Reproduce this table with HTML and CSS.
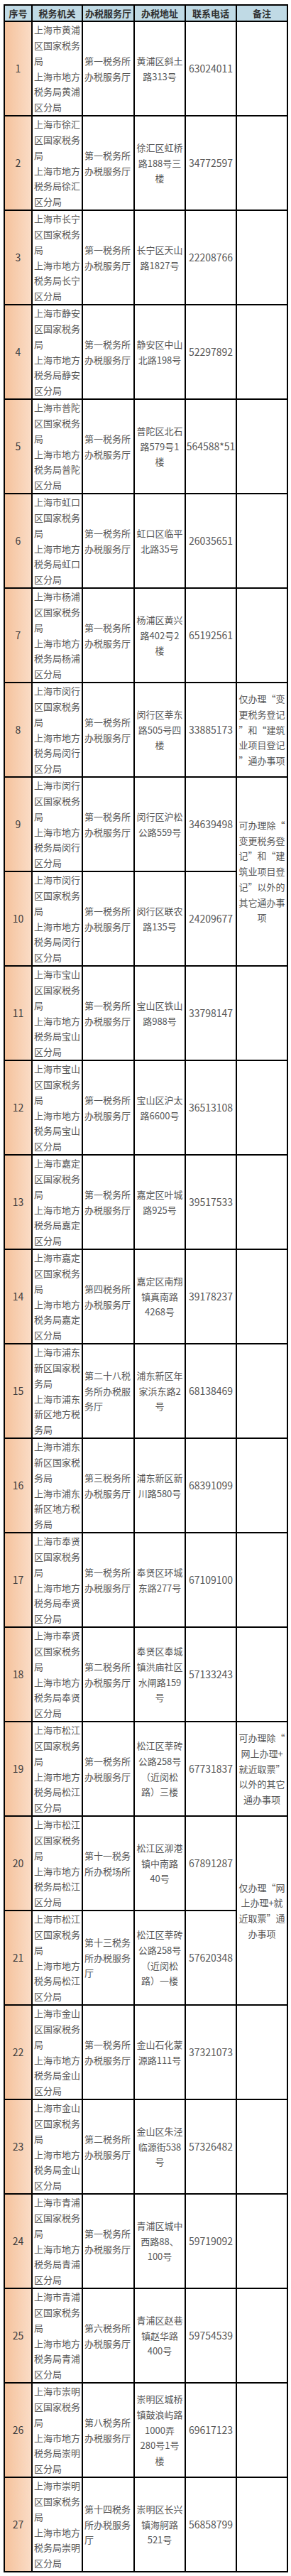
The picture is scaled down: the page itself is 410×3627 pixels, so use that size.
FILE: index.html
```html
<!DOCTYPE html>
<html lang="zh-CN">
<head>
<meta charset="utf-8">
<title>上海市办税服务厅</title>
<link rel="stylesheet" href="styles.css">
</head>
<body>
<div class="sheet">
  <div class="c th">序号</div>
  <div class="c th">税务机关</div>
  <div class="c th">办税服务厅</div>
  <div class="c th">办税地址</div>
  <div class="c th">联系电话</div>
  <div class="c th">备注</div>

  <div class="c idx"><p>1</p></div>
  <div class="c org"><p>上海市黄浦<br>区国家税务<br>局<br>上海市地方<br>税务局黄浦<br>区分局</p></div>
  <div class="c hall"><p>第一税务所<br>办税服务厅</p></div>
  <div class="c addr"><p>黄浦区斜土<br>路313号</p></div>
  <div class="c tel"><p>63024011</p></div>
  <div class="c note"></div>

  <div class="c idx"><p>2</p></div>
  <div class="c org"><p>上海市徐汇<br>区国家税务<br>局<br>上海市地方<br>税务局徐汇<br>区分局</p></div>
  <div class="c hall"><p>第一税务所<br>办税服务厅</p></div>
  <div class="c addr"><p>徐汇区虹桥<br>路188号三<br>楼</p></div>
  <div class="c tel"><p>34772597</p></div>
  <div class="c note"></div>

  <div class="c idx"><p>3</p></div>
  <div class="c org"><p>上海市长宁<br>区国家税务<br>局<br>上海市地方<br>税务局长宁<br>区分局</p></div>
  <div class="c hall"><p>第一税务所<br>办税服务厅</p></div>
  <div class="c addr"><p>长宁区天山<br>路1827号</p></div>
  <div class="c tel"><p>22208766</p></div>
  <div class="c note"></div>

  <div class="c idx"><p>4</p></div>
  <div class="c org"><p>上海市静安<br>区国家税务<br>局<br>上海市地方<br>税务局静安<br>区分局</p></div>
  <div class="c hall"><p>第一税务所<br>办税服务厅</p></div>
  <div class="c addr"><p>静安区中山<br>北路198号</p></div>
  <div class="c tel"><p>52297892</p></div>
  <div class="c note"></div>

  <div class="c idx"><p>5</p></div>
  <div class="c org"><p>上海市普陀<br>区国家税务<br>局<br>上海市地方<br>税务局普陀<br>区分局</p></div>
  <div class="c hall"><p>第一税务所<br>办税服务厅</p></div>
  <div class="c addr"><p>普陀区北石<br>路579号1<br>楼</p></div>
  <div class="c tel"><p>564588*51</p></div>
  <div class="c note"></div>

  <div class="c idx"><p>6</p></div>
  <div class="c org"><p>上海市虹口<br>区国家税务<br>局<br>上海市地方<br>税务局虹口<br>区分局</p></div>
  <div class="c hall"><p>第一税务所<br>办税服务厅</p></div>
  <div class="c addr"><p>虹口区临平<br>北路35号</p></div>
  <div class="c tel"><p>26035651</p></div>
  <div class="c note"></div>

  <div class="c idx"><p>7</p></div>
  <div class="c org"><p>上海市杨浦<br>区国家税务<br>局<br>上海市地方<br>税务局杨浦<br>区分局</p></div>
  <div class="c hall"><p>第一税务所<br>办税服务厅</p></div>
  <div class="c addr"><p>杨浦区黄兴<br>路402号2<br>楼</p></div>
  <div class="c tel"><p>65192561</p></div>
  <div class="c note"></div>

  <div class="c idx"><p>8</p></div>
  <div class="c org"><p>上海市闵行<br>区国家税务<br>局<br>上海市地方<br>税务局闵行<br>区分局</p></div>
  <div class="c hall"><p>第一税务所<br>办税服务厅</p></div>
  <div class="c addr"><p>闵行区莘东<br>路505号四<br>楼</p></div>
  <div class="c tel"><p>33885173</p></div>
  <div class="c note"><p>仅办理“变<br>更税务登记<br>”和“建筑<br>业项目登记<br>”通办事项</p></div>

  <div class="c idx"><p>9</p></div>
  <div class="c org"><p>上海市闵行<br>区国家税务<br>局<br>上海市地方<br>税务局闵行<br>区分局</p></div>
  <div class="c hall"><p>第一税务所<br>办税服务厅</p></div>
  <div class="c addr"><p>闵行区沪松<br>公路559号</p></div>
  <div class="c tel"><p>34639498</p></div>
  <div class="c note span2"><p>可办理除“<br>变更税务登<br>记”和“建<br>筑业项目登<br>记”以外的<br>其它通办事<br>项</p></div>

  <div class="c idx"><p>10</p></div>
  <div class="c org"><p>上海市闵行<br>区国家税务<br>局<br>上海市地方<br>税务局闵行<br>区分局</p></div>
  <div class="c hall"><p>第一税务所<br>办税服务厅</p></div>
  <div class="c addr"><p>闵行区联农<br>路135号</p></div>
  <div class="c tel"><p>24209677</p></div>

  <div class="c idx"><p>11</p></div>
  <div class="c org"><p>上海市宝山<br>区国家税务<br>局<br>上海市地方<br>税务局宝山<br>区分局</p></div>
  <div class="c hall"><p>第一税务所<br>办税服务厅</p></div>
  <div class="c addr"><p>宝山区铁山<br>路988号</p></div>
  <div class="c tel"><p>33798147</p></div>
  <div class="c note"></div>

  <div class="c idx"><p>12</p></div>
  <div class="c org"><p>上海市宝山<br>区国家税务<br>局<br>上海市地方<br>税务局宝山<br>区分局</p></div>
  <div class="c hall"><p>第一税务所<br>办税服务厅</p></div>
  <div class="c addr"><p>宝山区沪太<br>路6600号</p></div>
  <div class="c tel"><p>36513108</p></div>
  <div class="c note"></div>

  <div class="c idx"><p>13</p></div>
  <div class="c org"><p>上海市嘉定<br>区国家税务<br>局<br>上海市地方<br>税务局嘉定<br>区分局</p></div>
  <div class="c hall"><p>第一税务所<br>办税服务厅</p></div>
  <div class="c addr"><p>嘉定区叶城<br>路925号</p></div>
  <div class="c tel"><p>39517533</p></div>
  <div class="c note"></div>

  <div class="c idx"><p>14</p></div>
  <div class="c org"><p>上海市嘉定<br>区国家税务<br>局<br>上海市地方<br>税务局嘉定<br>区分局</p></div>
  <div class="c hall"><p>第四税务所<br>办税服务厅</p></div>
  <div class="c addr"><p>嘉定区南翔<br>镇真南路<br>4268号</p></div>
  <div class="c tel"><p>39178237</p></div>
  <div class="c note"></div>

  <div class="c idx"><p>15</p></div>
  <div class="c org"><p>上海市浦东<br>新区国家税<br>务局<br>上海市浦东<br>新区地方税<br>务局</p></div>
  <div class="c hall"><p>第二十八税<br>务所办税服<br>务厅</p></div>
  <div class="c addr"><p>浦东新区年<br>家浜东路2<br>号</p></div>
  <div class="c tel"><p>68138469</p></div>
  <div class="c note"></div>

  <div class="c idx"><p>16</p></div>
  <div class="c org"><p>上海市浦东<br>新区国家税<br>务局<br>上海市浦东<br>新区地方税<br>务局</p></div>
  <div class="c hall"><p>第三税务所<br>办税服务厅</p></div>
  <div class="c addr"><p>浦东新区新<br>川路580号</p></div>
  <div class="c tel"><p>68391099</p></div>
  <div class="c note"></div>

  <div class="c idx"><p>17</p></div>
  <div class="c org"><p>上海市奉贤<br>区国家税务<br>局<br>上海市地方<br>税务局奉贤<br>区分局</p></div>
  <div class="c hall"><p>第一税务所<br>办税服务厅</p></div>
  <div class="c addr"><p>奉贤区环城<br>东路277号</p></div>
  <div class="c tel"><p>67109100</p></div>
  <div class="c note"></div>

  <div class="c idx"><p>18</p></div>
  <div class="c org"><p>上海市奉贤<br>区国家税务<br>局<br>上海市地方<br>税务局奉贤<br>区分局</p></div>
  <div class="c hall"><p>第二税务所<br>办税服务厅</p></div>
  <div class="c addr"><p>奉贤区奉城<br>镇洪庙社区</p><p class="skip">水闸路159<br>号</p></div>
  <div class="c tel"><p>57133243</p></div>
  <div class="c note"></div>

  <div class="c idx"><p>19</p></div>
  <div class="c org"><p>上海市松江<br>区国家税务<br>局<br>上海市地方<br>税务局松江<br>区分局</p></div>
  <div class="c hall"><p>第一税务所<br>办税服务厅</p></div>
  <div class="c addr"><p>松江区莘砖<br>公路258号</p><p class="skip">（近闵松<br>路）三楼</p></div>
  <div class="c tel"><p>67731837</p></div>
  <div class="c note"><p>可办理除“<br>网上办理+<br>就近取票”<br>以外的其它<br>通办事项</p></div>

  <div class="c idx"><p>20</p></div>
  <div class="c org"><p>上海市松江<br>区国家税务<br>局<br>上海市地方<br>税务局松江<br>区分局</p></div>
  <div class="c hall"><p>第十一税务<br>所办税场所</p></div>
  <div class="c addr"><p>松江区泖港<br>镇中南路<br>40号</p></div>
  <div class="c tel"><p>67891287</p></div>
  <div class="c note span2"><p>仅办理“网<br>上办理+就<br>近取票”通<br>办事项</p></div>

  <div class="c idx"><p>21</p></div>
  <div class="c org"><p>上海市松江<br>区国家税务<br>局<br>上海市地方<br>税务局松江<br>区分局</p></div>
  <div class="c hall"><p>第十三税务<br>所办税服务<br>厅</p></div>
  <div class="c addr"><p>松江区莘砖<br>公路258号</p><p class="skip">（近闵松<br>路）一楼</p></div>
  <div class="c tel"><p>57620348</p></div>

  <div class="c idx"><p>22</p></div>
  <div class="c org"><p>上海市金山<br>区国家税务<br>局<br>上海市地方<br>税务局金山<br>区分局</p></div>
  <div class="c hall"><p>第一税务所<br>办税服务厅</p></div>
  <div class="c addr"><p>金山石化蒙<br>源路111号</p></div>
  <div class="c tel"><p>37321073</p></div>
  <div class="c note"></div>

  <div class="c idx"><p>23</p></div>
  <div class="c org"><p>上海市金山<br>区国家税务<br>局<br>上海市地方<br>税务局金山<br>区分局</p></div>
  <div class="c hall"><p>第二税务所<br>办税服务厅</p></div>
  <div class="c addr"><p>金山区朱泾<br>临源街538<br>号</p></div>
  <div class="c tel"><p>57326482</p></div>
  <div class="c note"></div>

  <div class="c idx"><p>24</p></div>
  <div class="c org"><p>上海市青浦<br>区国家税务<br>局<br>上海市地方<br>税务局青浦<br>区分局</p></div>
  <div class="c hall"><p>第一税务所<br>办税服务厅</p></div>
  <div class="c addr"><p>青浦区城中<br>西路88、<br>100号</p></div>
  <div class="c tel"><p>59719092</p></div>
  <div class="c note"></div>

  <div class="c idx"><p>25</p></div>
  <div class="c org"><p>上海市青浦<br>区国家税务<br>局<br>上海市地方<br>税务局青浦<br>区分局</p></div>
  <div class="c hall"><p>第六税务所<br>办税服务厅</p></div>
  <div class="c addr"><p>青浦区赵巷<br>镇赵华路<br>400号</p></div>
  <div class="c tel"><p>59754539</p></div>
  <div class="c note"></div>

  <div class="c idx"><p>26</p></div>
  <div class="c org"><p>上海市崇明<br>区国家税务<br>局<br>上海市地方<br>税务局崇明<br>区分局</p></div>
  <div class="c hall"><p>第八税务所<br>办税服务厅</p></div>
  <div class="c addr"><p>崇明区城桥<br>镇鼓浪屿路</p><p class="half">1000弄<br>280号1号<br>楼</p></div>
  <div class="c tel"><p>69617123</p></div>
  <div class="c note"></div>

  <div class="c idx"><p>27</p></div>
  <div class="c org"><p>上海市崇明<br>区国家税务<br>局<br>上海市地方<br>税务局崇明<br>区分局</p></div>
  <div class="c hall"><p>第十四税务<br>所办税服务<br>厅</p></div>
  <div class="c addr"><p>崇明区长兴<br>镇海舸路<br>521号</p></div>
  <div class="c tel"><p>56858799</p></div>
  <div class="c note"></div>
</div>
</body>
</html>
```

FILE: styles.css
```css
html, body {
  background: #ffffff;
}

body {
  margin: 6px 0 0 5px;
  font-family: "Noto Sans CJK SC", "Noto Sans", sans-serif;
  font-size: 13px;
  color: #575757;
}

.sheet {
  display: grid;
  grid-template-columns: 39px 71px 73px 72px 72px 72px;
  grid-template-rows: 23px repeat(27, 133px);
  width: max-content;
  border-left: 2px solid #000;
  border-top: 2px solid #000;
}

.c {
  box-sizing: border-box;
  border-right: 2px solid #000;
  border-bottom: 2px solid #000;
  display: flex;
  flex-direction: column;
  justify-content: center;
  line-height: 21.7px;
  white-space: nowrap;
  overflow: visible;
}

.c p {
  margin: 0;
}

.th {
  background: #c0dae5;
  color: #2f2f2f;
  font-weight: 700;
  text-align: center;
  line-height: 20px;
}

.idx {
  background: linear-gradient(to right, #f5c29c, #fadcc6);
  color: #3c3c3c;
  font-size: 14px;
  text-align: center;
}

.org,
.hall {
  padding-left: 2px;
  text-align: left;
}

.addr {
  text-align: center;
}

.tel {
  font-size: 14px;
  text-align: center;
}

.note {
  text-align: center;
}

.span2 {
  grid-row: span 2;
}

.skip {
  margin-top: 21.7px;
}

.half {
  margin-top: 11px;
}
```
